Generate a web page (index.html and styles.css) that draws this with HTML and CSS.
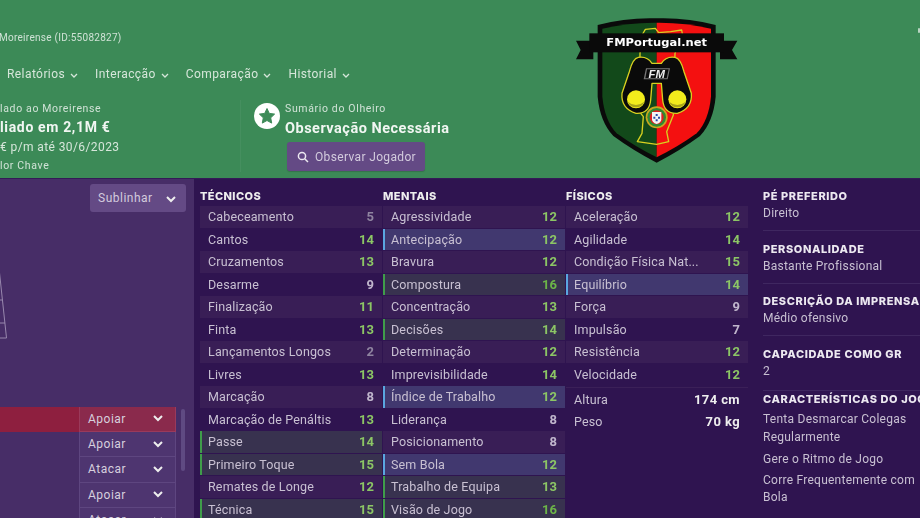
FILE: index.html
```html
<!DOCTYPE html>
<html lang="pt">
<head>
<meta charset="utf-8">
<title>Perfil do Jogador</title>
<link rel="stylesheet" href="styles.css">
</head>
<body>
<div class="page">
  <header class="header">
    <div class="player-id">Moreirense (ID:55082827)</div>
    <nav class="nav">
      <span class="nav-item">Relatórios <svg class="nav-chev" viewBox="0 0 8 5"><path d="M1 1l3 3 3-3"/></svg></span>
      <span class="nav-item">Interacção <svg class="nav-chev" viewBox="0 0 8 5"><path d="M1 1l3 3 3-3"/></svg></span>
      <span class="nav-item">Comparação <svg class="nav-chev" viewBox="0 0 8 5"><path d="M1 1l3 3 3-3"/></svg></span>
      <span class="nav-item">Historial <svg class="nav-chev" viewBox="0 0 8 5"><path d="M1 1l3 3 3-3"/></svg></span>
    </nav>
    <div class="info">
      <div class="contract">
        <div class="small">lado ao Moreirense</div>
        <div class="strong">liado em 2,1M €</div>
        <div class="wage">€ p/m até 30/6/2023</div>
        <div class="small">lor Chave</div>
      </div>
      <div class="scout">
        <svg class="star" viewBox="0 0 26 26"><circle cx="13" cy="13" r="13" fill="#fff"/><path d="M13 5.5l2.3 4.9 5.3.7-3.9 3.7 1 5.3-4.7-2.6-4.7 2.6 1-5.3-3.9-3.7 5.3-.7z" fill="#3d8b58" stroke="#3d8b58" stroke-width="1" stroke-linejoin="round"/></svg>
        <div class="scout-text">
          <div class="small">Sumário do Olheiro</div>
          <div class="scout-title">Observação Necessária</div>
          <div class="btn btn-scout"><svg class="search" viewBox="0 0 12 12"><circle cx="5" cy="5" r="3.6"/><path d="M7.7 7.7L11 11"/></svg>Observar Jogador</div>
        </div>
      </div>
    </div>
    <svg class="logo" viewBox="0 0 600 525">
      <path d="M48 122H100V178H48L62 150Z" fill="#0a0a0a"/>
      <path d="M532 122H480V178H532L516 150Z" fill="#0a0a0a"/>
      <path d="M113 75Q200 52 290 55Q380 52 467 75V290Q460 365 420 408Q360 452 290 488Q220 452 160 408Q120 365 113 290Z" fill="#0a0a0a"/>
      <path d="M127 86Q205 67 290 68V472Q225 440 170 400Q134 362 127 290Z" fill="#12491a"/>
      <path d="M453 86Q375 67 290 68V472Q355 440 410 400Q446 362 453 290Z" fill="#f41010"/>
      <path d="M248 102L256 88L286 85L296 98L332 95L365 90L368 108L345 160L340 345L320 395L326 425L290 433L232 425L246 400L250 350L238 335L240 160Z" fill="none" stroke="#d8d020" stroke-width="4" stroke-linejoin="round"/>
      <path d="M235 172Q262 168 276 190H304Q318 168 345 172Q362 175 372 215L394 280Q398 325 352 340Q312 342 308 300L304 250H276L272 300Q268 342 228 340Q182 325 186 280L208 215Q218 175 235 172Z" fill="#0a0a0a" stroke="#d8d020" stroke-width="4" stroke-linejoin="round"/>
      <circle cx="228" cy="298" r="27" fill="#f2ec1c"/>
      <path d="M203 305A27 27 0 0 0 253 305Q228 325 203 305Z" fill="#a9a51a"/>
      <circle cx="352" cy="298" r="27" fill="#f2ec1c"/>
      <path d="M327 305A27 27 0 0 0 377 305Q352 325 327 305Z" fill="#a9a51a"/>
      <rect x="88" y="100" width="404" height="57" fill="#0a0a0a"/>
      <text x="290" y="138" class="logo-name" textLength="302" lengthAdjust="spacingAndGlyphs">FMPortugal.net</text>
      <path d="M258 205H330L323 238H251Z" fill="#777"/>
      <path d="M261 208H326L320 235H256Z" fill="#0a0a0a"/>
      <text x="290" y="233" class="logo-fm">FM</text>
      <circle cx="290" cy="352" r="33" fill="#c8a820"/>
      <circle cx="290" cy="352" r="28" fill="#2f8a32"/>
      <circle cx="290" cy="352" r="21" fill="#d92222"/>
      <path d="M276 336H304V358Q304 368 290 372Q276 368 276 358Z" fill="#f4f4f4"/>
      <path d="M287 342h6v6h-6zM280 350h6v6h-6zM294 350h6v6h-6zM287 358h6v6h-6z" fill="#2a4aa8"/>
    </svg>
    <span class="corner-mark"></span>
  </header>
  <main class="main">
    <aside class="side">
      <div class="btn btn-highlight">Sublinhar <svg class="btn-chev" viewBox="0 0 10 7"><path d="M1 1l4 4 4-4"/></svg></div>
      <svg class="pitch" viewBox="0 0 8 110"><path d="M-4 10L6.5 108H-4M-4 70H2.5M-4 93H5"/></svg>
      <div class="squad">
        <div class="squad-list">
          <div class="squad-row is-active"><span class="role">Apoiar <svg class="cell-chev" viewBox="0 0 10 7"><path d="M1 1l4 4 4-4"/></svg></span></div>
          <div class="squad-row"><span class="role">Apoiar <svg class="cell-chev" viewBox="0 0 10 7"><path d="M1 1l4 4 4-4"/></svg></span></div>
          <div class="squad-row"><span class="role">Atacar <svg class="cell-chev" viewBox="0 0 10 7"><path d="M1 1l4 4 4-4"/></svg></span></div>
          <div class="squad-row"><span class="role">Apoiar <svg class="cell-chev" viewBox="0 0 10 7"><path d="M1 1l4 4 4-4"/></svg></span></div>
          <div class="squad-row"><span class="role">Atacar <svg class="cell-chev" viewBox="0 0 10 7"><path d="M1 1l4 4 4-4"/></svg></span></div>
        </div>
        <div class="scrollbar"></div>
      </div>
    </aside>
    <section class="attrs">
      <div class="col">
        <h2 class="col-title">TÉCNICOS</h2>
        <div class="row"><span>Cabeceamento</span><b class="dim">5</b></div>
        <div class="row"><span>Cantos</span><b class="good">14</b></div>
        <div class="row"><span>Cruzamentos</span><b class="good">13</b></div>
        <div class="row"><span>Desarme</span><b>9</b></div>
        <div class="row"><span>Finalização</span><b class="good">11</b></div>
        <div class="row"><span>Finta</span><b class="good">13</b></div>
        <div class="row"><span>Lançamentos Longos</span><b class="dim">2</b></div>
        <div class="row"><span>Livres</span><b class="good">13</b></div>
        <div class="row"><span>Marcação</span><b>8</b></div>
        <div class="row"><span>Marcação de Penáltis</span><b class="good">13</b></div>
        <div class="row key"><span>Passe</span><b class="good">14</b></div>
        <div class="row key"><span>Primeiro Toque</span><b class="good">15</b></div>
        <div class="row"><span>Remates de Longe</span><b class="good">12</b></div>
        <div class="row key"><span>Técnica</span><b class="good">15</b></div>
      </div>
      <div class="col">
        <h2 class="col-title">MENTAIS</h2>
        <div class="row"><span>Agressividade</span><b class="good">12</b></div>
        <div class="row pref"><span>Antecipação</span><b class="good">12</b></div>
        <div class="row"><span>Bravura</span><b class="good">12</b></div>
        <div class="row key"><span>Compostura</span><b class="top">16</b></div>
        <div class="row"><span>Concentração</span><b class="good">13</b></div>
        <div class="row key"><span>Decisões</span><b class="good">14</b></div>
        <div class="row"><span>Determinação</span><b class="good">12</b></div>
        <div class="row"><span>Imprevisibilidade</span><b class="good">14</b></div>
        <div class="row pref"><span>Índice de Trabalho</span><b class="good">12</b></div>
        <div class="row"><span>Liderança</span><b>8</b></div>
        <div class="row"><span>Posicionamento</span><b>8</b></div>
        <div class="row pref"><span>Sem Bola</span><b class="good">12</b></div>
        <div class="row key"><span>Trabalho de Equipa</span><b class="good">13</b></div>
        <div class="row key"><span>Visão de Jogo</span><b class="top">16</b></div>
      </div>
      <div class="col">
        <h2 class="col-title">FÍSICOS</h2>
        <div class="row"><span>Aceleração</span><b class="good">12</b></div>
        <div class="row"><span>Agilidade</span><b class="good">14</b></div>
        <div class="row"><span>Condição Física Nat...</span><b class="good">15</b></div>
        <div class="row pref"><span>Equilíbrio</span><b class="good">14</b></div>
        <div class="row"><span>Força</span><b>9</b></div>
        <div class="row"><span>Impulsão</span><b>7</b></div>
        <div class="row"><span>Resistência</span><b class="good">12</b></div>
        <div class="row"><span>Velocidade</span><b class="good">12</b></div>
        <div class="measures">
          <div class="measure"><span>Altura</span><b>174 cm</b></div>
          <div class="measure"><span>Peso</span><b>70 kg</b></div>
        </div>
      </div>
      <div class="facts">
        <div class="fact"><h3>PÉ PREFERIDO</h3><p>Direito</p></div>
        <div class="fact"><h3>PERSONALIDADE</h3><p>Bastante Profissional</p></div>
        <div class="fact"><h3>DESCRIÇÃO DA IMPRENSA</h3><p>Médio ofensivo</p></div>
        <div class="fact"><h3>CAPACIDADE COMO GR</h3><p>2</p></div>
        <div class="fact traits"><h3>CARACTERÍSTICAS DO JOGO</h3><p>Tenta Desmarcar Colegas Regularmente</p><p>Gere o Ritmo de Jogo</p><p>Corre Frequentemente com Bola</p></div>
      </div>
    </section>
  </main>
</div>
</body>
</html>
```
FILE: styles.css
```css
* { box-sizing: border-box; }
html, body { margin: 0; padding: 0; background: #2f1450; }
body { width: 920px; height: 518px; overflow: hidden; }
.page {
  width: 920px; height: 518px; overflow: hidden;
  font-family: Roboto, "Liberation Sans", sans-serif;
  font-size: 12px; letter-spacing: .35px; color: #c8c0d2;
  filter: blur(.45px);
}
svg { display: block; }

/* header */
.header { position: relative; height: 178px; background: #3c8a57; color: #d6e6da; padding-top: 31px; overflow: hidden; }
.player-id { margin-left: -1px; font-size: 10px; line-height: 13px; color: #cfe2d5; letter-spacing: .27px; }
.nav { display: flex; gap: 17px; margin: 23px 0 0 7px; font-size: 12px; line-height: 14px; letter-spacing: .42px; }
.nav-item { display: flex; align-items: center; gap: 5px; white-space: nowrap; }
.nav-chev { width: 8px; height: 5px; fill: none; stroke: #d6e6da; stroke-width: 1.3; margin-top: 2px; }
.info { display: flex; margin-top: 19px; }
.contract { width: 241px; height: 72px; border-right: 1px solid #458f5f; padding-top: 2px; }
.small { font-size: 10.5px; line-height: 13px; white-space: nowrap; color: #d0e2d6; letter-spacing: .65px; }
.strong { font-size: 14px; font-weight: 700; line-height: 20px; margin-top: 2px; color: #f1f6f2; letter-spacing: .65px; }
.wage { font-size: 12px; line-height: 18px; margin-top: 1px; letter-spacing: .4px; }
.contract .small:last-child { margin-top: 3px; }
.scout { display: flex; margin-left: 13px; padding-top: 2px; gap: 5px; }
.star { width: 26px; height: 26px; margin-top: 1px; }
.scout-title { font-size: 14.5px; font-weight: 700; line-height: 20px; margin-top: 4px; color: #f1f6f2; letter-spacing: .5px; }
.btn { display: flex; align-items: center; background: #644a85; border-radius: 3px; color: #d3cbdd; }
.btn-scout { width: 138px; height: 29px; margin: 3px 0 0 2px; padding-left: 10px; gap: 6px; letter-spacing: .35px; box-shadow: 0 1px 1px rgba(40,60,50,.3); }
.search { width: 12px; height: 12px; fill: none; stroke: #ece8f0; stroke-width: 1.5; margin-top: 1px; }
.logo { position: absolute; left: 560px; top: 0; width: 200px; height: 175px; }
.logo-name { font-family: "DejaVu Sans", sans-serif; font-weight: 700; font-size: 34px; fill: #fff; text-anchor: middle; letter-spacing: 0; }
.logo-fm { font-family: "Liberation Sans", sans-serif; font-weight: 700; font-style: italic; font-size: 34px; fill: #eee; text-anchor: middle; letter-spacing: 0; }
.corner-mark { position: absolute; right: 0; top: 28px; width: 2px; height: 5px; background: #b9d4c2; border-radius: 1px; }

/* main */
.main { display: flex; height: 340px; border-top: 1px solid #341a57; }
.side { position: relative; flex: 0 0 194px; background: #472d67; padding: 5px 0 0 90px; }
.btn-highlight { width: 96px; height: 28px; padding: 0 10px 0 8px; justify-content: space-between; letter-spacing: .5px; }
.btn-chev { width: 10px; height: 7px; fill: none; stroke: #eee; stroke-width: 2; margin-top: 3px; }
.pitch { position: absolute; left: 0; top: 51px; width: 8px; height: 110px; fill: none; stroke: #9887ad; stroke-width: 1; overflow: hidden; }
.squad { position: absolute; left: 0; top: 227.5px; width: 194px; display: flex; }
.squad-list { width: 176px; }
.squad-row { height: 25.4px; padding-left: 79px; }
.squad-row.is-active { background: #8e1f3f; }
.role { display: flex; align-items: center; justify-content: space-between; height: 100%; padding: 0 12px 0 8px; background: #4e3570; border: solid #5e4680; border-width: 0 1px 1px 1px; color: #d6cfde; letter-spacing: .5px; }
.is-active .role { background: #8a2a4c; border-color: #9a3a5b; }
.cell-chev { width: 10px; height: 7px; fill: none; stroke: #eee; stroke-width: 2; }
.scrollbar { width: 4px; height: 62px; margin: 2px 0 0 5px; background: #5f4a82; border-radius: 2px; }

/* attributes */
.attrs { flex: 1; display: flex; padding-left: 6px; overflow: hidden; }
.col { flex: 0 0 183px; }
.col-title { margin: 0; height: 27px; padding-top: 10px; font-family: Inter, sans-serif; font-size: 11px; line-height: 14px; font-weight: 800; color: #eee; letter-spacing: .4px; }
.row { display: flex; justify-content: space-between; align-items: center; width: 182px; height: 21.5px; margin-bottom: 1px; padding: 0 8px; white-space: nowrap; font-size: 12.5px; letter-spacing: .15px; }
.row:nth-of-type(odd) { background: #391e56; }
.row:nth-of-type(even) { background: transparent; }
.row b { font-weight: 700; font-size: 13px; color: #c0b6cc; letter-spacing: 0; }
.row b.dim { color: #8f84a0; }
.row b.good { color: #8cc665; }
.row b.top { color: #6cb548; }
.row.key { background: #38324f; border-left: 2px solid #3f9d4a; padding-left: 6px; }
.row.pref { background: #41386f; border-left: 2px solid #5aa6e0; padding-left: 6px; }
.measures { margin-top: 2px; border-top: 1px solid #3b2058; width: 182px; }
.measure { display: flex; justify-content: space-between; align-items: center; height: 22.5px; padding: 0 8px; font-size: 12.5px; letter-spacing: .15px; }
.measure b { font-weight: 700; font-size: 13px; color: #eee; letter-spacing: .4px; }

/* facts */
.facts { flex: 0 0 157px; margin-left: 14px; padding-top: 11px; white-space: nowrap; overflow: hidden; }
.fact { height: 41px; margin-bottom: 11.5px; border-bottom: 1px solid #3f2760; }
.fact:nth-child(4) { height: 43px; margin-bottom: 0; }
.fact h3 { margin: 0; font-family: Inter, sans-serif; font-size: 11px; line-height: 13px; font-weight: 800; color: #ece8f0; letter-spacing: .6px; }
.fact p { margin: 3px 0 0; font-size: 12px; line-height: 15px; letter-spacing: .25px; white-space: normal; width: 160px; }
.traits { height: auto; border: 0; margin: 0; padding-top: 2px; }
.traits p { line-height: 17.5px; margin-top: 4.5px; }
.traits p:first-of-type { margin-top: 5.5px; }
.traits p:last-of-type { margin-top: 3.5px; }
```
